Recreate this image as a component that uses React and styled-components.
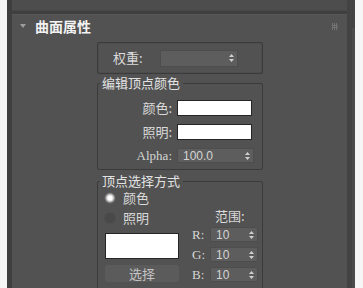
import React from 'react';
import styled, { createGlobalStyle } from 'styled-components';

const GlobalStyle = createGlobalStyle`
   html, body {
      margin: 0;
      padding: 0;
      background: #f6f6f6;
   }
   body {
      font-family: "Noto Sans CJK SC", "Noto Sans", sans-serif;
      font-size: 13px;
      color: #dcdcdc;
   }
`;

const Frame = styled.div`
   display: flex;
   margin-left: 7px;
   width: 348px;
   height: 288px;
   background: #3f3f3f;
   overflow: hidden;
`;

const Column = styled.div`
   display: flex;
   flex-direction: column;
   gap: 3px;
   padding-left: 5px;
   width: 335px;
   min-height: 0;
`;

const PrevPanel = styled.div`
   flex-shrink: 0;
   height: 10px;
   background: #4d4d4d;
   border-bottom: 1px solid #474747;
`;

const Panel = styled.div`
   flex: 1;
   min-height: 0;
   overflow: hidden;
   background: #525252;
   border-top: 1px solid #575757;
`;

const Scrollbar = styled.div`
   display: flex;
   width: 8px;
   background: #434343;
`;

const Track = styled.div`
   flex: 1;
`;

const Thumb = styled.div`
   width: 3px;
   margin-top: 28px;
   background: #4b4b4b;
`;

const Heading = styled.div`
   display: flex;
   align-items: center;
   height: 22px;
   padding-left: 8px;
   padding-right: 9px;
   gap: 9px;
`;

const Caret = styled.span`
   width: 0;
   height: 0;
   border-left: 3px solid transparent;
   border-right: 3px solid transparent;
   border-top: 4px solid #9c9c9c;
`;

const Title = styled.span`
   flex: 1;
   font-size: 14px;
   font-weight: 700;
   line-height: 16px;
   color: #f2f2f2;
`;

const Box = styled.div`
   display: flex;
   align-items: center;
   gap: 17px;
   margin: 5px 0 0 85px;
   width: 166px;
   height: 32px;
   padding-left: 15px;
   box-sizing: border-box;
   border: 1px solid #3b3b3b;
   border-radius: 2px;
   box-shadow: inset 0 0 0 1px #4d4d4d;
`;

const Group = styled.fieldset`
   margin: ${(p) => p.$top}px 0 0 85px;
   width: 166px;
   box-sizing: border-box;
   padding: ${(p) => p.$pad};
   border: 1px solid #3b3b3b;
   border-radius: 2px;
   min-width: 0;
`;

const Legend = styled.legend`
   padding: 0 3px 0 2px;
   margin-left: 2px;
   line-height: 14px;
   font-size: 13px;
   color: #e2e2e2;
`;

const Label = styled.span`
   line-height: 14px;
   color: #dadada;
   white-space: nowrap;
`;

const LatinLabel = styled.span`
   font-family: "Liberation Serif", serif;
   font-size: 13px;
   line-height: 14px;
   color: #d6d6d6;
`;

const Field = styled.div`
   display: flex;
   align-items: center;
   justify-content: space-between;
   width: ${(p) => p.$w}px;
   height: ${(p) => p.$h}px;
   box-sizing: border-box;
   padding: 0 3px 0 5px;
   background: #5d5d5d;
   border: 1px solid #4d4d4d;
   font-family: "Liberation Sans", sans-serif;
   font-size: 12px;
   color: #d4d4d4;
`;

const Swatch = styled.div`
   width: ${(p) => p.$w}px;
   height: ${(p) => p.$h}px;
   margin-top: ${(p) => p.$mt || 0}px;
   box-sizing: border-box;
   background: #ffffff;
   border: 1px solid #262626;
`;

const ColorGrid = styled.div`
   display: grid;
   grid-template-columns: 74px 80px;
   column-gap: 5px;
   row-gap: 8px;
   align-items: center;
   justify-items: start;
   & > span {
      justify-self: end;
   }
`;

const Split = styled.div`
   display: flex;
   gap: 13px;
   padding-left: 7px;
`;

const LeftCol = styled.div`
   display: flex;
   flex-direction: column;
   width: 74px;
`;

const RightCol = styled.div`
   display: flex;
   flex-direction: column;
   width: 66px;
   padding-top: 18px;
`;

const RadioRow = styled.div`
   display: flex;
   align-items: center;
   gap: 8px;
   height: 14px;
   margin-bottom: 6px;
`;

const Radio = styled.span`
   width: 10px;
   height: 10px;
   border-radius: 50%;
   background: ${(p) =>
      p.$on ? 'radial-gradient(circle, #ffffff 0 2px, #d8d8d8 3px, #7a7a7a 5px)' : '#494949'};
   box-shadow: 0 0 0 1px ${(p) => (p.$on ? '#5e5e5e' : '#4e4e4e')};
`;

const Button = styled.div`
   display: flex;
   align-items: center;
   justify-content: center;
   margin-top: 6px;
   height: 17px;
   background: #5b5b5b;
   border-radius: 3px;
   color: #c4c4c4;
   line-height: 14px;
`;

const RangeLabel = styled(Label)`
   margin-left: 23px;
   margin-bottom: 4px;
`;

const RgbRow = styled.div`
   display: flex;
   align-items: center;
   justify-content: space-between;
   margin-bottom: 5px;
`;

const Arrows = () => (
   <svg width="5" height="8" viewBox="0 0 5 8">
      <path d="M2.5 0 L5 3 L0 3 Z M0 5 L5 5 L2.5 8 Z" fill="#cfcfcf" />
   </svg>
);

const Grip = () => (
   <svg width="6" height="7" viewBox="0 0 6 7">
      <g fill="#727272">
         <rect x="0" y="0" width="1" height="7" />
         <rect x="2" y="0" width="1" height="7" />
         <rect x="4" y="0" width="1" height="7" />
         <rect x="0" y="2" width="6" height="1" />
         <rect x="0" y="4" width="6" height="1" />
      </g>
   </svg>
);

export default function App() {
   return (
      <>
         <GlobalStyle />
         <Frame>
            <Column>
               <PrevPanel />
               <Panel>
                  <Heading>
                     <Caret />
                     <Title>曲面属性</Title>
                     <Grip />
                  </Heading>

                  <Box>
                     <Label>权重:</Label>
                     <Field $w={78} $h={17}>
                        <span />
                        <Arrows />
                     </Field>
                  </Box>

                  <Group $top={2} $pad="10px 0 6px 0">
                     <Legend>编辑顶点颜色</Legend>
                     <ColorGrid>
                        <Label>颜色:</Label>
                        <Swatch $w={75} $h={16} />
                        <Label>照明:</Label>
                        <Swatch $w={75} $h={16} />
                        <LatinLabel>Alpha:</LatinLabel>
                        <Field $w={77} $h={15}>
                           <span>100.0</span>
                           <Arrows />
                        </Field>
                     </ColorGrid>
                  </Group>

                  <Group $top={4} $pad="3px 0 6px 0">
                     <Legend>顶点选择方式</Legend>
                     <Split>
                        <LeftCol>
                           <RadioRow>
                              <Radio $on />
                              <Label>颜色</Label>
                           </RadioRow>
                           <RadioRow>
                              <Radio />
                              <Label>照明</Label>
                           </RadioRow>
                           <Swatch $w={74} $h={26} $mt={2} />
                           <Button>选择</Button>
                        </LeftCol>
                        <RightCol>
                           <RangeLabel>范围:</RangeLabel>
                           {['R', 'G', 'B'].map((c) => (
                              <RgbRow key={c}>
                                 <LatinLabel>{c}:</LatinLabel>
                                 <Field $w={48} $h={15}>
                                    <span>10</span>
                                    <Arrows />
                                 </Field>
                              </RgbRow>
                           ))}
                        </RightCol>
                     </Split>
                  </Group>
               </Panel>
            </Column>
            <Scrollbar>
               <Track />
               <Thumb />
            </Scrollbar>
         </Frame>
      </>
   );
}
